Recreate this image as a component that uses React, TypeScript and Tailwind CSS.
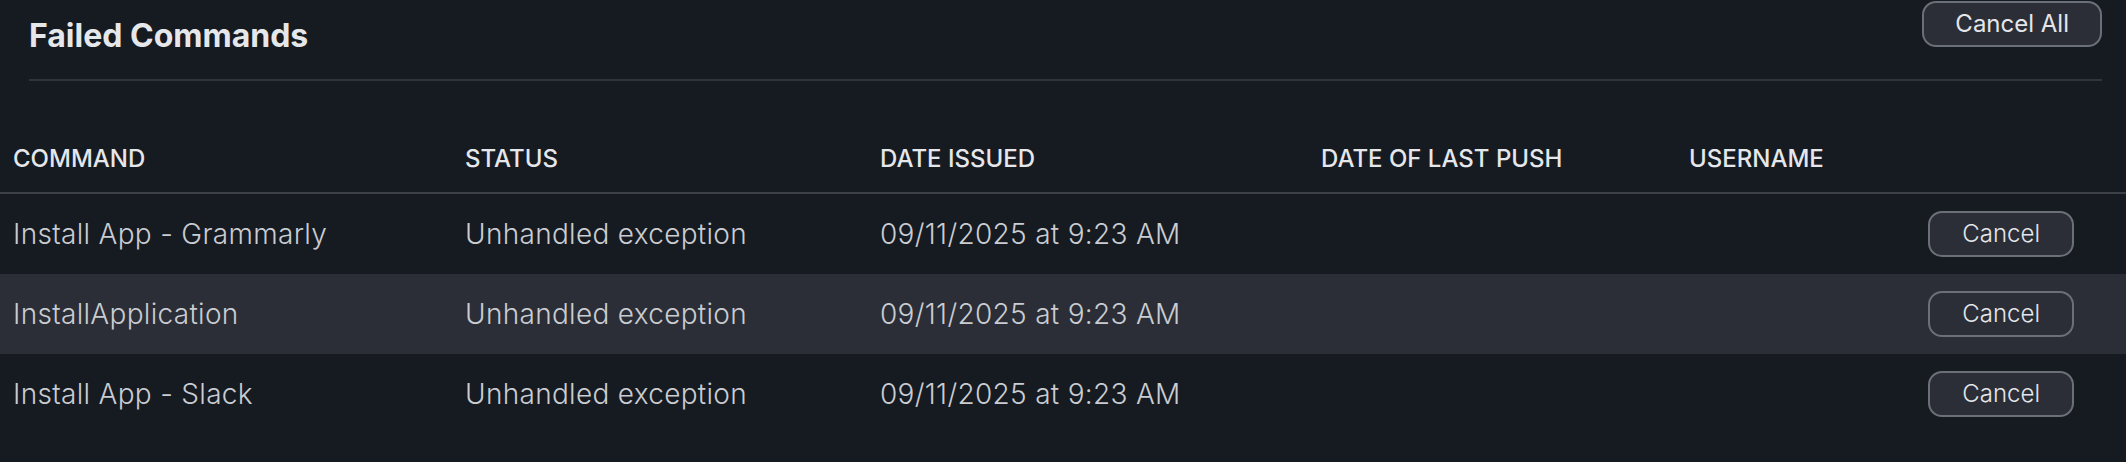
const commands = [
  { name: "Install App - Grammarly", status: "Unhandled exception", issued: "09/11/2025 at 9:23 AM" },
  { name: "InstallApplication", status: "Unhandled exception", issued: "09/11/2025 at 9:23 AM" },
  { name: "Install App - Slack", status: "Unhandled exception", issued: "09/11/2025 at 9:23 AM" },
];

const cols = "grid grid-cols-[465px_415px_441px_368px_1fr_auto]";

function OutlineButton({ children, pad }: { children: React.ReactNode; pad: string }) {
  return (
    <button className={`h-[46px] ${pad} rounded-[14px] border-2 border-[#6b6f77] bg-[#2b2e36] text-[24px] leading-none text-[#e4e6ea]`}>
      {children}
    </button>
  );
}

export default function App() {
  return (
    <div className="min-h-screen bg-[#161a21] font-['Inter',sans-serif] text-[#e5e7eb]">
      {/* header */}
      <div className="pl-[29px] pr-[24px]">
        <div className="flex justify-between items-start">
          <h1 className="mt-[17px] text-[32px] leading-[37px] font-bold text-[#e6e7ea]">Failed Commands</h1>
          <div className="mt-[1px]">
            <OutlineButton pad="px-[31px]">Cancel All</OutlineButton>
          </div>
        </div>
        <div className="mt-[25px] h-[2px] bg-[#30333a]" />
      </div>

      {/* table */}
      <div className="mt-[45px]">
        <div className={`${cols} h-[68px] items-center border-b-2 border-[#3d4047] text-[24px] font-medium uppercase text-[#e5e7eb]`}>
          <div className="pl-[13px]">Command</div>
          <div>Status</div>
          <div>Date Issued</div>
          <div>Date of Last Push</div>
          <div>Username</div>
          <div className="w-[197px]" />
        </div>
        {commands.map((c, i) => (
          <div
            key={i}
            className={`${cols} h-[80px] items-center text-[28px] font-light tracking-[0.3px] text-[#c9ccd1] ${i === 1 ? "bg-[#2b2e36]" : ""}`}
          >
            <div className="pl-[13px]">{c.name}</div>
            <div>{c.status}</div>
            <div>{c.issued}</div>
            <div></div>
            <div></div>
            <div className="pr-[52px] flex justify-end">
              <OutlineButton pad="px-[32px] tracking-normal">Cancel</OutlineButton>
            </div>
          </div>
        ))}
      </div>
    </div>
  );
}
